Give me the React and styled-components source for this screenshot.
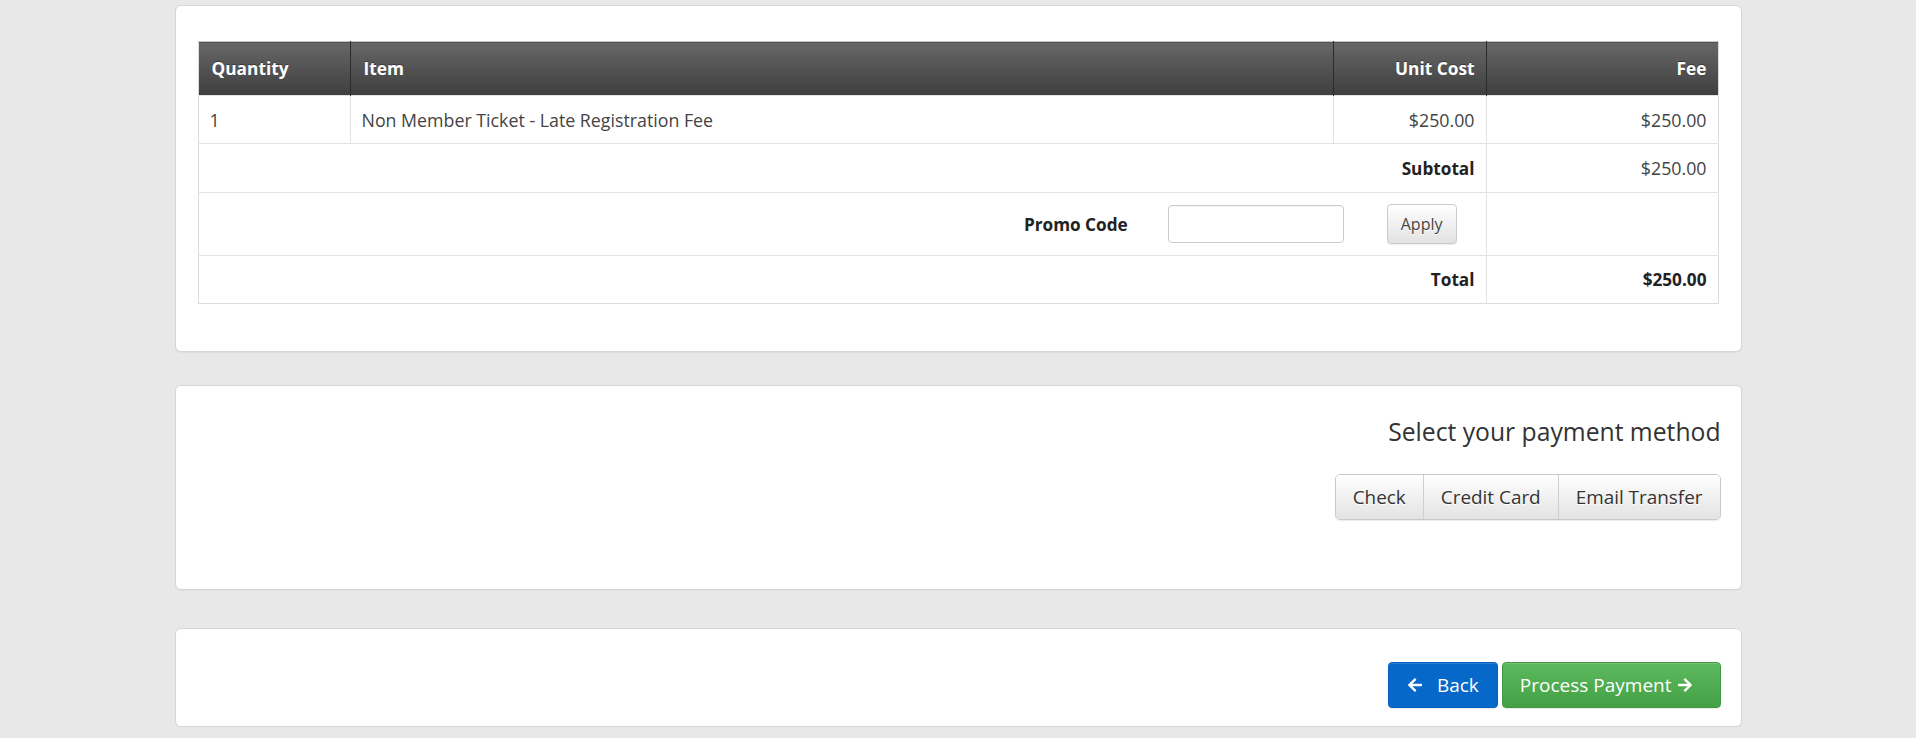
import React from 'react'
import styled, { createGlobalStyle } from 'styled-components'
import { FaArrowLeft, FaArrowRight } from 'react-icons/fa'

const GlobalStyle = createGlobalStyle`
	body {
		margin: 0;
		background: #e8e8e8;
		font-family: "Open Sans", "Liberation Sans", sans-serif;
		color: #333;
	}
`

const Page = styled.div`
	width: 1567px;
	margin: 0 auto;
	padding: 5px 0 0;
	display: flex;
	flex-direction: column;
`

const Panel = styled.div`
	background: #fff;
	border: 1px solid #d6d6d6;
	border-radius: 6px;
	box-shadow: 0 1px 1px rgba(0, 0, 0, 0.04);
	padding: ${p => p.$pad};
	margin-bottom: ${p => p.$gap || 0}px;
	display: flex;
	flex-direction: column;
	align-items: ${p => (p.$end ? 'flex-end' : 'stretch')};
`

const Table = styled.table`
	width: 100%;
	border-collapse: collapse;
	table-layout: fixed;
	font-size: 17.8px;
	border: 1px solid #dcdcdc;
	border-top: 1px solid #c6c6c6;
`

const Th = styled.th`
	height: 53px;
	padding: 0 11px 0 13px;
	text-align: ${p => (p.$right ? 'right' : 'left')};
	font-weight: 700;
	font-size: 17.3px;
	color: #fff;
	text-shadow: 0 -1px 0 rgba(0, 0, 0, 0.35);
	background: linear-gradient(to bottom, #676767 0%, #3e3e3e 100%);
	border-left: 1px solid #2c2c2c;
	&:first-child {
		border-left: none;
	}
`

const Td = styled.td`
	padding: 0 11px;
	height: ${p => p.$h || 47}px;
	text-align: ${p => (p.$right ? 'right' : 'left')};
	font-weight: ${p => (p.$bold ? 700 : 400)};
	font-size: ${p => (p.$bold ? 17.2 : 17.8)}px;
	color: ${p => (p.$bold ? '#222' : '#444')};
	border-left: 1px solid #e2e2e2;
	border-top: 1px solid #e2e2e2;
	&:first-child {
		border-left: none;
	}
`

const PromoRow = styled.div`
	display: flex;
	align-items: center;
	justify-content: flex-end;
	padding-right: 18px;
`

const PromoLabel = styled.span`
	font-weight: 700;
	font-size: 17.2px;
	color: #222;
	margin-right: 40px;
`

const PromoInput = styled.input`
	width: 176px;
	height: 38px;
	box-sizing: border-box;
	border: 1px solid #ccc;
	border-radius: 4px;
	margin-right: 43px;
	font: inherit;
	padding: 0 10px;
	box-shadow: inset 0 1px 1px rgba(0, 0, 0, 0.05);
`

const SmallButton = styled.button`
	height: 40px;
	padding: 0 13px;
	font: inherit;
	font-size: 16px;
	color: #444;
	background: linear-gradient(to bottom, #fff 0%, #e2e2e2 100%);
	border: 1px solid #ccc;
	border-radius: 4px;
	box-shadow: 0 1px 1px rgba(0, 0, 0, 0.08);
	text-shadow: 0 1px 0 #fff;
`

const Title = styled.div`
	font-size: 24.7px;
	line-height: 30px;
	color: #333;
	margin-bottom: 27px;
`

const Group = styled.div`
	display: flex;
	border: 1px solid #c9c9c9;
	border-radius: 5px;
	overflow: hidden;
	box-shadow: 0 1px 1px rgba(0, 0, 0, 0.08);
`

const GroupButton = styled.button`
	height: 44px;
	padding: 0 17px;
	font: inherit;
	font-size: 18.9px;
	color: #333;
	background: linear-gradient(to bottom, #fff 0%, #e3e3e3 100%);
	border: none;
	border-left: 1px solid #cfcfcf;
	text-shadow: 0 1px 0 #fff;
	&:first-child {
		border-left: none;
	}
`

const Actions = styled.div`
	display: flex;
	gap: 4px;
`

const ActionButton = styled.button`
	height: 46px;
	display: flex;
	align-items: center;
	gap: ${p => p.$gap}px;
	padding: ${p => p.$pad};
	font: inherit;
	font-size: 19px;
	color: #fff;
	border-radius: 4px;
	border: 1px solid ${p => p.$border};
	background: ${p => p.$bg};
	box-shadow: inset 0 1px 0 rgba(255, 255, 255, 0.15), 0 1px 1px rgba(0, 0, 0, 0.08);
`

const rows = [{ qty: 1, item: 'Non Member Ticket - Late Registration Fee', cost: '$250.00', fee: '$250.00' }]

const App = () => (
	<Page>
		<GlobalStyle />
		<Panel $pad='35px 22px 47px' $gap={33}>
			<Table>
				<colgroup>
					<col style={{ width: 152 }} />
					<col />
					<col style={{ width: 153 }} />
					<col style={{ width: 232 }} />
				</colgroup>
				<thead>
					<tr>
						<Th>Quantity</Th>
						<Th>Item</Th>
						<Th $right>Unit Cost</Th>
						<Th $right>Fee</Th>
					</tr>
				</thead>
				<tbody>
					{rows.map(r => (
						<tr key={r.item}>
							<Td>{r.qty}</Td>
							<Td>{r.item}</Td>
							<Td $right>{r.cost}</Td>
							<Td $right>{r.fee}</Td>
						</tr>
					))}
					<tr>
						<Td colSpan={3} $right $bold $h={48}>Subtotal</Td>
						<Td $right $h={48}>$250.00</Td>
					</tr>
					<tr>
						<Td colSpan={3} $h={62}>
							<PromoRow>
								<PromoLabel>Promo Code</PromoLabel>
								<PromoInput type='text' />
								<SmallButton>Apply</SmallButton>
							</PromoRow>
						</Td>
						<Td $h={62} />
					</tr>
					<tr>
						<Td colSpan={3} $right $bold>Total</Td>
						<Td $right $bold>$250.00</Td>
					</tr>
				</tbody>
			</Table>
		</Panel>
		<Panel $pad='31px 20px 69px' $gap={38} $end>
			<Title>Select your payment method</Title>
			<Group>
				<GroupButton>Check</GroupButton>
				<GroupButton>Credit Card</GroupButton>
				<GroupButton>Email Transfer</GroupButton>
			</Group>
		</Panel>
		<Panel $pad='33px 20px 18px' $end>
			<Actions>
				<ActionButton $gap={14} $pad='0 18px' $bg='#0668c9' $border='#0560bb'>
					<FaArrowLeft size={16} />
					Back
				</ActionButton>
				<ActionButton
					$gap={5}
					$pad='0 27px 0 17px'
					$bg='linear-gradient(to bottom, #5db95d 0%, #44a044 100%)'
					$border='#3f983f'
				>
					Process Payment
					<FaArrowRight size={16} />
				</ActionButton>
			</Actions>
		</Panel>
	</Page>
)

export default App
